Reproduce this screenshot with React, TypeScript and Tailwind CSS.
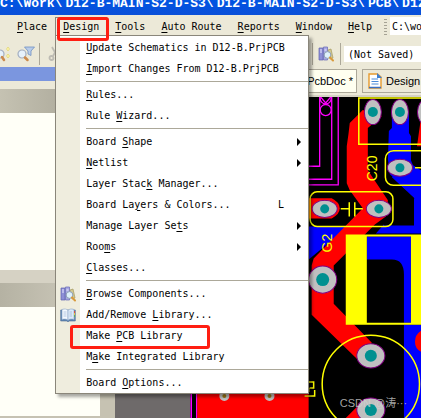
import type { ReactNode } from 'react';

type MenuEntry =
  | { kind: 'separator' }
  | {
      kind: 'item';
      label: string;
      hot: number; // index of the underlined access key
      icon?: ReactNode;
      shortcut?: string;
      submenu?: boolean;
      marked?: boolean;
    };

const SearchBooks = () => (
  <svg viewBox="0 0 16 16" className="size-4 shrink-0" aria-hidden="true">
    <path d="M1 2h4v12H1z" fill="#8e8fd6" stroke="#5f61b0" strokeWidth=".7" />
    <path d="M5.500 1h4v13h-4z" fill="#a9a9e4" stroke="#6567b4" strokeWidth=".7" />
    <path d="M10 4l3-1 2 9-3 1z" fill="#d3c98f" stroke="#a49a62" strokeWidth=".7" />
    <path d="M2 4h2M2 6h2M6.500 4h2" stroke="#e9e9ff" />
    <circle cx="9.500" cy="9" r="3.400" fill="#def1fb" stroke="#8c9cb4" />
    <path d="M12 11.500l3 3" stroke="#d99a3c" strokeWidth="2" strokeLinecap="round" />
  </svg>
);

const OpenBook = () => (
  <svg viewBox="0 0 16 16" className="size-4 shrink-0" aria-hidden="true">
    <path d="M.7 3h14.600v11H9l-1 1-1-1H.7z" fill="#5f86b4" stroke="#4d6c96" strokeWidth=".6" />
    <path d="M2 2.500c2.500-1 4.500-.5 6 .8v9.900c-1.500-1.200-3.500-1.500-6-.7z" fill="#f3f8ff" stroke="#8ba6c8" strokeWidth=".6" />
    <path d="M14 2.500c-2.500-1-4.500-.5-6 .8v9.900c1.500-1.200 3.500-1.500 6-.7z" fill="#dce9f8" stroke="#8ba6c8" strokeWidth=".6" />
    <path d="M3.500 5h3M3.500 7h3M3.500 9h3M9.500 5H12M9.500 7H12M9.500 9H12" stroke="#9cb6d6" strokeWidth=".7" />
    <path d="M14.500 4v2" stroke="#d8514a" />
    <path d="M14.500 6v2" stroke="#e6c64a" />
    <path d="M14.500 8v2" stroke="#5cae5c" />
  </svg>
);

const Magnifier = () => (
  <svg viewBox="0 0 18 18" className="size-[18px] shrink-0" aria-hidden="true">
    <path d="M7.500 2h10l-3.500 4V10.500l-3-1.500V6z" fill="#b9cde9" stroke="#7191c2" strokeWidth=".8" />
    <circle cx="5" cy="9" r="4" fill="#e6f1fb" stroke="#a3aec0" strokeWidth="1.200" />
    <path d="M8 12.500l2.500 2.500" stroke="#cb8a4d" strokeWidth="2.500" strokeLinecap="round" />
  </svg>
);

const FindNext = () => (
  <svg viewBox="0 0 10 16" className="h-4 w-[10px] shrink-0" aria-hidden="true">
    <path d="M0 4a4 4 0 0 1 0 8" fill="#e6f1fb" stroke="#a3aec0" strokeWidth="1.200" />
    <path d="M2 11l2 3" stroke="#cb8a4d" strokeWidth="2.500" strokeLinecap="round" />
    <path d="M8 1l1.500 2L8 5 6.500 3zM8 8l1.500 2L8 12l-1.500-2z" fill="#fff9a8" stroke="#dacb63" strokeWidth=".6" />
  </svg>
);

const Cut = () => (
  <svg viewBox="0 0 14 16" className="h-4 w-[14px] shrink-0" fill="none" stroke="#bdbbb3" strokeWidth="1.800" aria-hidden="true">
    <path d="M4 1l5 9M10 1L5 10" />
    <circle cx="3.500" cy="12" r="2" />
    <circle cx="10" cy="12" r="2" />
  </svg>
);

const SheetIcon = () => (
  <svg viewBox="0 0 14 16" className="h-4 w-[14px] shrink-0" aria-hidden="true">
    <path d="M1 1h8.500L13 4v11H1z" fill="#fff" stroke="#e69a2e" strokeWidth="1.400" />
    <path d="M9 0l5 5H9z" fill="#3a7ed2" />
    <path d="M3.500 6h6.500M3.500 8.500h7M3.500 11h7" stroke="#4b8bd8" />
    <path d="M1 14.500h12" stroke="#3a6fc0" strokeWidth="1.500" />
  </svg>
);

const sep: MenuEntry = { kind: 'separator' };

const designMenu: MenuEntry[] = [
  { kind: 'item', label: 'Update Schematics in D12-B.PrjPCB', hot: 0 },
  { kind: 'item', label: 'Import Changes From D12-B.PrjPCB', hot: 0 },
  sep,
  { kind: 'item', label: 'Rules...', hot: 0 },
  { kind: 'item', label: 'Rule Wizard...', hot: 5 },
  sep,
  { kind: 'item', label: 'Board Shape', hot: 6, submenu: true },
  { kind: 'item', label: 'Netlist', hot: 0, submenu: true },
  { kind: 'item', label: 'Layer Stack Manager...', hot: 10 },
  { kind: 'item', label: 'Board Layers & Colors...', hot: 8, shortcut: 'L' },
  { kind: 'item', label: 'Manage Layer Sets', hot: 15, submenu: true },
  { kind: 'item', label: 'Rooms', hot: 3, submenu: true },
  { kind: 'item', label: 'Classes...', hot: 0 },
  sep,
  { kind: 'item', label: 'Browse Components...', hot: 0, icon: <SearchBooks /> },
  { kind: 'item', label: 'Add/Remove Library...', hot: 11, icon: <OpenBook /> },
  { kind: 'item', label: 'Make PCB Library', hot: 5, marked: true },
  { kind: 'item', label: 'Make Integrated Library', hot: 1 },
  sep,
  { kind: 'item', label: 'Board Options...', hot: 6 },
];

function HotLabel({ label, hot }: { label: string; hot: number }) {
  return (
    <span className="whitespace-pre">
      {label.slice(0, hot)}
      <u className="underline-offset-2">{label[hot]}</u>
      {label.slice(hot + 1)}
    </span>
  );
}

function DesignMenu() {
  return (
    <ul className="absolute top-full left-0 z-10 w-[254px] border border-[#8a867a] bg-white pt-px shadow-[3px_3px_3px_rgba(0,0,0,0.35)]">
      {designMenu.map((entry, i) =>
        entry.kind === 'separator' ? (
          <li key={i} className="flex h-[5px] items-center">
            <span className="h-full w-6 bg-[#efedde]" />
            <hr className="ml-1.5 flex-1 border-[#aca899]" />
          </li>
        ) : (
          <li key={i} className="relative">
            <button type="button" className="flex h-[21px] w-full items-center text-left">
              <span className="flex h-full w-6 items-center justify-center bg-[#efedde]">{entry.icon}</span>
              <span className="flex-1 pl-1.5">
                <HotLabel label={entry.label} hot={entry.hot} />
              </span>
              {entry.shortcut && <span className="pr-6">{entry.shortcut}</span>}
              {entry.submenu && (
                <svg viewBox="0 0 4 8" className="mr-[7px] h-2 w-1" aria-hidden="true">
                  <path d="M0 0l4 4-4 4z" />
                </svg>
              )}
            </button>
            {entry.marked && (
              <span className="pointer-events-none absolute top-0 left-[14px] z-10 h-6 w-[140px] rounded-[3px] border-3 border-[#ff1e12]" />
            )}
          </li>
        ),
      )}
    </ul>
  );
}

const menus = ['Place', 'Design', 'Tools', 'Auto Route', 'Reports', 'Window', 'Help'];

function MenuBar() {
  return (
    <nav className="flex h-[22px] items-start bg-[#ece9d8] pt-0.5 pl-[9px]">
      {menus.map((name) => (
        <div key={name} className="relative shrink-0">
          <button
            type="button"
            className={
              name === 'Design'
                ? 'flex h-[18px] items-center border-t border-l border-[#8a867a] bg-[#efedde] pr-2 pl-[7px] pt-px'
                : 'flex h-[18px] items-center px-2 pt-0.5'
            }
          >
            <HotLabel label={name} hot={0} />
          </button>
          {name === 'Design' && (
            <>
              <DesignMenu />
              <span className="pointer-events-none absolute top-0 left-0.5 z-20 h-6 w-[52px] rounded-[3px] border-3 border-[#ff1e12]" />
            </>
          )}
        </div>
      ))}
      <span className="ml-1 h-4 w-[3px] shrink-0 self-center bg-[repeating-linear-gradient(#a5a294_0_1px,transparent_1px_3px)]" />
      <input
        aria-label="Address"
        defaultValue="C:\work\D12-B-MAIN-S2-D-S3"
        className="ml-[3px] h-[18px] min-w-0 flex-1 bg-white pl-0.5 outline-none"
      />
    </nav>
  );
}

function Toolbar() {
  return (
    <div className="flex h-[30px] items-center bg-[#ece9d8] pt-1">
      <FindNext />
      <span className="ml-[7px] flex">
        <Magnifier />
      </span>
      <span className="ml-1 h-[22px] w-px shrink-0 bg-[#aca899]" />
      <span className="ml-2 flex">
        <Cut />
      </span>
      <span className="ml-[250px] h-[22px] w-px shrink-0 bg-[#aca899]" />
      <span className="ml-[5px] flex">
        <SearchBooks />
      </span>
      <span className="ml-[6px] h-[22px] w-px shrink-0 bg-[#aca899]" />
      <input
        aria-label="Variant"
        defaultValue="(Not Saved)"
        className="ml-[3px] h-4 min-w-0 flex-1 bg-white pl-1 outline-none"
      />
    </div>
  );
}

function SidePanels() {
  return (
    <aside className="flex w-[115px] shrink-0 flex-col bg-[#c6c2b2]">
      <div className="h-[14px] bg-[#7b96df]" />
      <div className="h-2 bg-[#ece9d8]" />
      <div className="h-6 bg-linear-to-r from-[#c5c2b2] to-[#a09d8f]" />
      <div className="h-[157px] bg-[#fffff7]" />
      <div className="h-[13px] bg-[#d6d2c4]" />
      <div className="h-6 bg-linear-to-r from-[#b5b2a3] to-[#d6d2c4]" />
      <div className="mb-px w-[100px] flex-1 border-b border-[#c6c2b2] bg-[#fffff7]" />
    </aside>
  );
}

function Pad({ x, y, rx, ry, hole = 5 }: { x: number; y: number; rx: number; ry: number; hole?: number }) {
  return (
    <>
      <ellipse cx={x} cy={y} rx={rx} ry={ry} fill="#c0c0c0" stroke="#800080" />
      <circle cx={x} cy={y} r={hole} fill="#009090" />
    </>
  );
}

function Board() {
  return (
    <svg viewBox="116 97 305 321" preserveAspectRatio="xMinYMin slice" className="absolute inset-0 size-full">
      <path d="M116 97h305v321H116z" fill="#000" />
      <path d="M116 97h75v321h-75z" fill="#6e6a6a" />
      <path d="M192 97v321M197.500 97v321" stroke="#f0f" strokeWidth="1.500" />
      <path d="M198 390h111v28H198z" fill="#f00" />
      <g fill="#9a7414" stroke="#c0c0c0" strokeWidth="3">
        <circle cx="225" cy="395" r="3.500" />
        <circle cx="270" cy="395" r="3.500" />
      </g>

      {/* bottom copper */}
      <g fill="#00f">
        <path d="M392 112h17v21l2 3v24l2 5 8 6v62H376l8-9h30v-27l-24-23-2-15 1-28 3-3z" />
        <path d="M309 226h40l-40 33z" />
        <path d="M367 236h44v86h-7v-48q0-15-12-15h-25z" />
        <path d="M404 324h17v94h-17z" />
      </g>
      <path d="M386 178l22 13 6 7v27h-30z" fill="#000" />
      <path d="M392 177l29 27v-34l-10-6z" fill="#00f" />

      {/* top copper */}
      <g fill="#f00">
        <path d="M363 110l-13 13q-1 10-3 23v37l3 7 13 18-49 50-2 7v49l45 44 15-16-38-39v-38l41-41 11-8 2-16-20-30V128l14-12z" />
        <path d="M309 198h23q8 4 8 10t-8 10h-23z" />
        <path d="M421 330q-6 4-6 11t6 10zM421 118l-2 14-2 14h4zM345 418l12-12 8 12z" />
      </g>

      {/* magenta mechanical outlines */}
      <g fill="none" stroke="#f0f" strokeWidth="1.300">
        <path d="M320 97v69h-11M332 97v82h-23M338.500 97v87.500H309" />
        <path d="M321 97l5 6 5-6" />
        <circle cx="326" cy="98.500" r="5.500" />
        <circle cx="326" cy="110" r="5.500" />
      </g>

      {/* silkscreen */}
      <g fill="none" stroke="#ff0" strokeWidth="1.500">
        <path d="M430 98h-71v46h71" />
        <rect x="385.500" y="150.500" width="50" height="34.500" rx="8" />
        <path d="M415 167.500h6" />
        <rect x="310.500" y="191.500" width="82.500" height="34.500" rx="7" />
        <path d="M341 208.500h8.500M349.500 202v14M355 202v14M355 208.500h8" />
        <circle cx="371" cy="383" r="48.500" />
        <path d="M309 381h5v6h-4M309 391v-4M315 389v6h-10" />
      </g>
      <path d="M346 234h75v2h-54v86h54v2h-75zM411 236h10v86h-10z" fill="#ff0" />

      <Pad x={373} y={112} rx={8.5} ry={12.5} />
      <Pad x={400} y={112} rx={8.5} ry={12.5} />
      <Pad x={426} y={112} rx={8.5} ry={12.5} />
      <Pad x={400} y={167.5} rx={12.5} ry={8.5} hole={4.5} />
      <Pad x={325} y={208.5} rx={12.5} ry={8.5} hole={4.5} />
      <Pad x={379} y={208.5} rx={12.5} ry={8.5} hole={4.5} />
      <Pad x={323} y={279} rx={14} ry={13.5} hole={6.5} />
      <Pad x={371} y={355} rx={14} ry={12} hole={6} />
      <Pad x={371} y={409} rx={14} ry={12} hole={6} />

      <g fill="#ff0" fontFamily="'Liberation Sans', sans-serif" fontSize="14">
        <text transform="translate(377 181) rotate(-90)">C20</text>
        <text transform="translate(332 252) rotate(-90)">G2</text>
      </g>
      <text x="340" y="406" fill="#d0d0d0" fillOpacity="0.8" fontFamily="'Liberation Sans', 'Noto Sans CJK SC', sans-serif" fontSize="11">
        CSDN @涛···
      </text>
    </svg>
  );
}

function Editor() {
  return (
    <main className="flex min-w-0 flex-1 flex-col">
      <div className="flex h-[30px] items-center gap-[5px] border-b-2 border-[#d6d2c4] bg-[#ece9d8] pl-[150px] font-['Liberation_Sans',sans-serif] text-[11px]">
        <button type="button" className="flex h-6 w-[92px] shrink-0 items-center justify-end border border-[#aca899] bg-[#fffff0] pr-[3px]">
          PcbDoc *
        </button>
        <button type="button" className="flex h-6 flex-1 items-center gap-1 overflow-hidden border border-r-0 border-[#aca899] bg-[#ece9d8] pl-[5px]">
          <SheetIcon />
          Design
        </button>
      </div>
      <div className="relative flex-1 overflow-hidden bg-black">
        <Board />
      </div>
    </main>
  );
}

const titleParts = ['C:\\Work\\', 'D12-B-MAIN-S2-D-S3\\', 'D12-B-MAIN-S2-D-S3\\', 'PCB\\', 'D12'];

export default function App() {
  return (
    <div className="flex min-h-screen flex-col overflow-hidden bg-[#ece9d8] font-['DejaVu_Sans_Mono',monospace] text-[10px] leading-3 text-black">
      <header className="flex h-[15px] gap-[3px] overflow-hidden bg-linear-to-b from-[#0054e3] to-[#0a4fd8] font-['Liberation_Mono',monospace] text-[13px] leading-[7px] font-bold whitespace-pre text-white">
        {titleParts.map((part, i) => (
          <span key={i} className="shrink-0">
            {part}
          </span>
        ))}
      </header>
      <MenuBar />
      <Toolbar />
      <div className="flex flex-1">
        <SidePanels />
        <Editor />
      </div>
    </div>
  );
}
